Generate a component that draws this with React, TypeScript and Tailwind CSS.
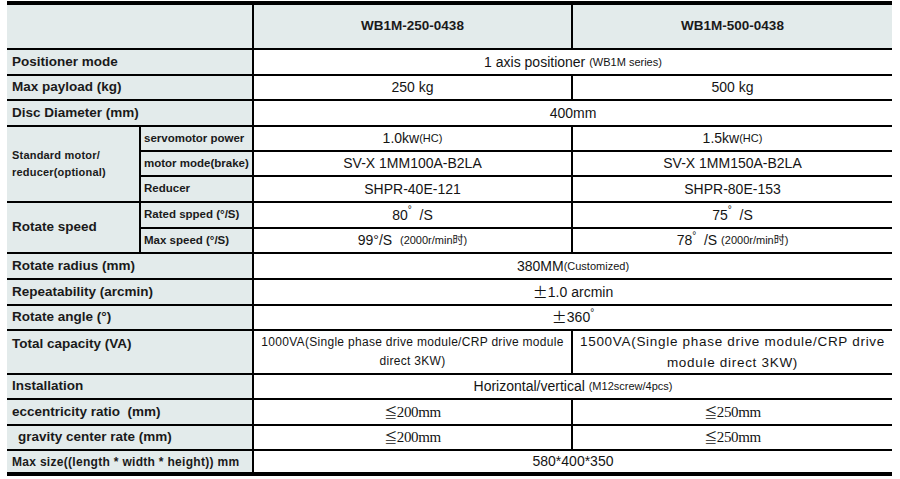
import type { ReactNode } from 'react';

const sans = { fontFamily: '"Liberation Sans", "Noto Sans CJK SC", Arial, sans-serif' };

function Label({
  children,
  className = '',
  size = 'text-[13.5px]',
}: {
  children: ReactNode;
  className?: string;
  size?: string;
}) {
  return (
    <div className={`flex whitespace-nowrap bg-[#e3ebeb] font-bold text-[#1a1a1a] ${size} ${className}`}>
      {children}
    </div>
  );
}

function Sub({ children }: { children: ReactNode }) {
  return (
    <div className="flex items-center whitespace-nowrap bg-[#e3ebeb] pl-[3px] text-[11.5px] font-bold text-[#1a1a1a]">
      {children}
    </div>
  );
}

function Val({
  children,
  className = '',
  size = 'text-[14px]',
}: {
  children: ReactNode;
  className?: string;
  size?: string;
}) {
  return (
    <div className={`flex items-center justify-center whitespace-nowrap bg-white text-center text-[#141414] ${size} ${className}`}>
      {children}
    </div>
  );
}

const Small = ({ children }: { children: ReactNode }) => <span className="text-[11px]">{children}</span>;

const Deg = () => <sup className="text-[10px]">°</sup>;

const Serif = ({ children }: { children: ReactNode }) => (
  <span className="text-[15px] tracking-tight" style={{ fontFamily: '"Liberation Serif", serif' }}>
    <span className="text-[13px]" style={{ fontFamily: '"Noto Sans CJK JP", sans-serif' }}>
      ≦
    </span>
    {children}
  </span>
);

const Pm = () => (
  <span className="text-[15px]" style={{ fontFamily: '"Noto Sans CJK JP", sans-serif' }}>
    ±
  </span>
);

export default function App() {
  return (
    <div className="min-h-screen bg-white pt-[1px]" style={sans}>
      <div className="ml-[7px] grid w-[885px] grid-cols-[132px_111px_317px_319px] grid-rows-[43px_24px_23px_24px_23px_23px_24px_24px_23px_24px_24px_23px_42px_23px_24px_23px_21px] gap-[2px] border-y-4 border-black bg-black">
        {/* header */}
        <div className="col-span-2 bg-[#e3ebeb]" />
        <div className="flex items-center justify-center bg-[#e3ebeb] text-[13.5px] font-bold text-[#1a1a1a]">WB1M-250-0438</div>
        <div className="flex items-center justify-center bg-[#e3ebeb] text-[13.5px] font-bold text-[#1a1a1a]">WB1M-500-0438</div>

        <Label className="col-span-2 items-center pl-[5px]">Positioner mode</Label>
        <Val className="col-span-2">
          1 axis positioner&nbsp;<Small>(WB1M series)</Small>
        </Val>

        <Label className="col-span-2 items-center pl-[5px]">Max payload (kg)</Label>
        <Val>250 kg</Val>
        <Val>500 kg</Val>

        <Label className="col-span-2 items-center pl-[5px]">Disc Diameter (mm)</Label>
        <Val className="col-span-2">400mm</Val>

        {/* standard motor block */}
        <Label className="row-span-3 items-center pl-[5px]" size="text-[11px] leading-[17px] tracking-[0.2px]">
          <span>
            Standard motor/
            <br />
            reducer(optional)
          </span>
        </Label>
        <Sub>servomotor power</Sub>
        <Val>
          1.0kw<Small>(HC)</Small>
        </Val>
        <Val>
          1.5kw<Small>(HC)</Small>
        </Val>
        <Sub>motor mode(brake)</Sub>
        <Val>SV-X 1MM100A-B2LA</Val>
        <Val>SV-X 1MM150A-B2LA</Val>
        <Sub>Reducer</Sub>
        <Val>SHPR-40E-121</Val>
        <Val>SHPR-80E-153</Val>

        {/* rotate speed */}
        <Label className="row-span-2 items-center pl-[5px]">Rotate speed</Label>
        <Sub>Rated spped (°/S)</Sub>
        <Val>
          80
          <Deg />
          &nbsp;&nbsp;/S
        </Val>
        <Val>
          75
          <Deg />
          &nbsp;&nbsp;/S
        </Val>
        <Sub>Max speed (°/S)</Sub>
        <Val>
          99°/S&nbsp;&nbsp;<Small>(2000r/min时)</Small>
        </Val>
        <Val>
          78
          <Deg />
          &nbsp;&nbsp;/S&nbsp;<Small>(2000r/min时)</Small>
        </Val>

        <Label className="col-span-2 items-center pl-[5px]">Rotate radius (mm)</Label>
        <Val className="col-span-2">
          380MM<Small>(Customized)</Small>
        </Val>

        <Label className="col-span-2 items-center pl-[5px]">Repeatability (arcmin)</Label>
        <Val className="col-span-2">
          <Pm />
          1.0 arcmin
        </Val>

        <Label className="col-span-2 items-center pl-[5px]">Rotate angle (°)</Label>
        <Val className="col-span-2">
          <Pm />
          360
          <Deg />
        </Val>

        <Label className="col-span-2 items-start pl-[5px] pt-[3px]">Total capacity (VA)</Label>
        <Val size="text-[12px] leading-[19px] tracking-[0.3px]">
          <span>
            1000VA(Single phase drive module/CRP drive module
            <br />
            direct 3KW)
          </span>
        </Val>
        <Val size="text-[13.5px] leading-[21px] tracking-[0.7px]">
          <span>
            1500VA(Single phase drive module/CRP drive
            <br />
            module direct 3KW)
          </span>
        </Val>

        <Label className="col-span-2 items-center pl-[5px]">Installation</Label>
        <Val className="col-span-2">
          Horizontal/vertical&nbsp;<Small>(M12screw/4pcs)</Small>
        </Val>

        <Label className="col-span-2 items-center pl-[5px]">eccentricity ratio&nbsp;&nbsp;(mm)</Label>
        <Val>
          <Serif>200mm</Serif>
        </Val>
        <Val>
          <Serif>250mm</Serif>
        </Val>

        <Label className="col-span-2 items-center pl-[11px]">gravity center rate (mm)</Label>
        <Val>
          <Serif>200mm</Serif>
        </Val>
        <Val>
          <Serif>250mm</Serif>
        </Val>

        <Label className="col-span-2 items-center pl-[5px]" size="text-[12px] tracking-[0.3px]">
          Max size((length * width * height)) mm
        </Label>
        <Val className="col-span-2">580*400*350</Val>
      </div>
    </div>
  );
}
